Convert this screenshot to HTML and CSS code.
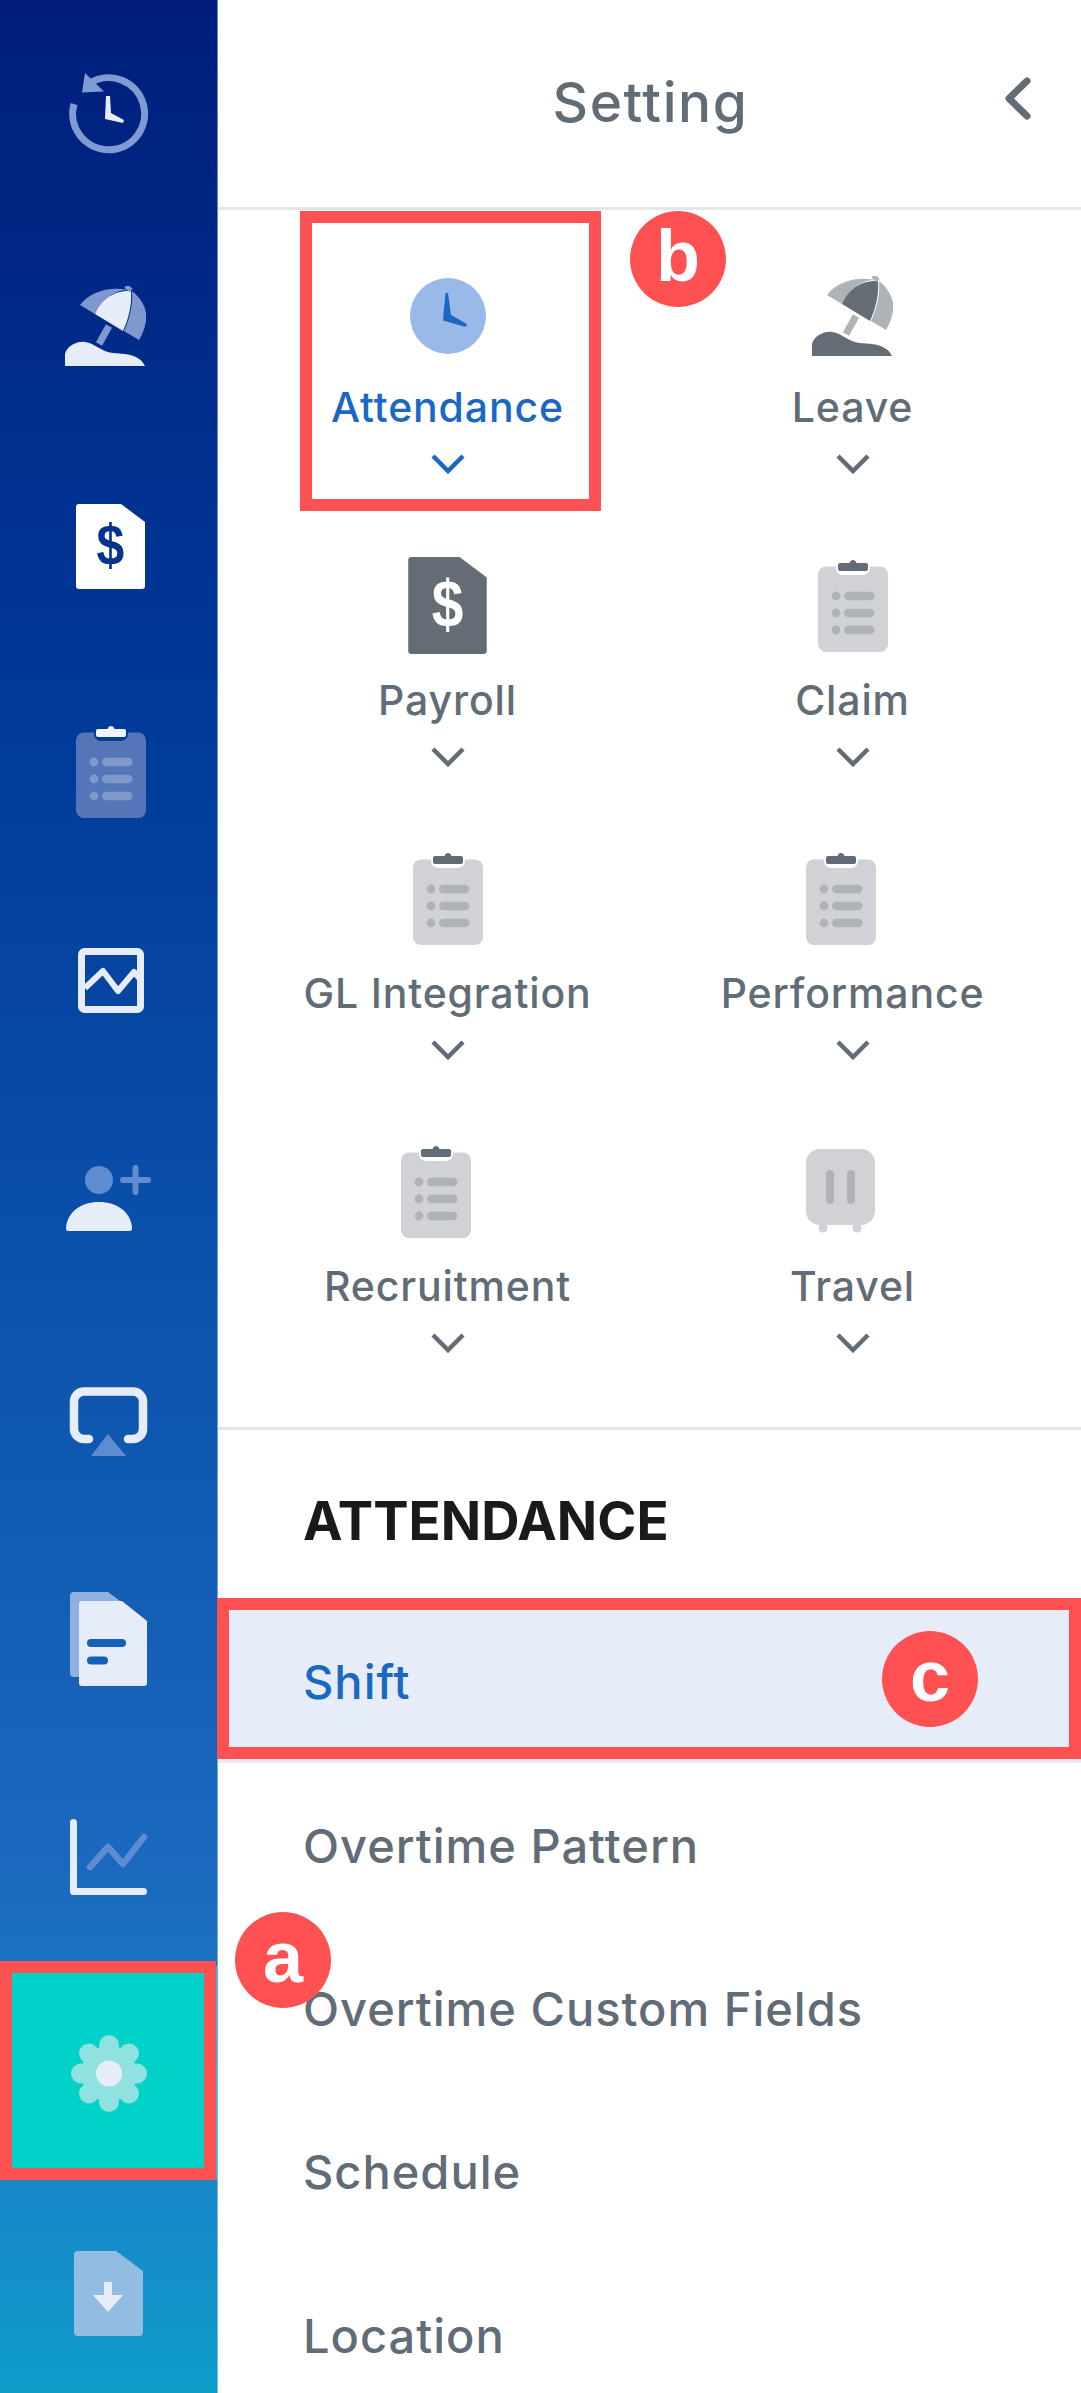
FILE: index.html
```html
<!DOCTYPE html>
<html lang="en">
<head>
<meta charset="utf-8">
<title>Setting</title>
<link rel="stylesheet" href="styles.css">
</head>
<body>
<svg class="defs" aria-hidden="true">
  <symbol id="i-clipboard" viewBox="0 0 70 94">
    <path class="a" d="M8 8.5H18V10a7 7 0 0 0 7 7H45a7 7 0 0 0 7-7V8.5H62a8 8 0 0 1 8 8V86a8 8 0 0 1-8 8H8a8 8 0 0 1-8-8V16.5a8 8 0 0 1 8-8Z"/>
    <circle class="b" cx="18" cy="38" r="4.4"/><circle class="b" cx="18" cy="55" r="4.4"/><circle class="b" cx="18" cy="72" r="4.4"/>
    <rect class="b" x="26" y="33.8" width="30.5" height="8.4" rx="4.2"/><rect class="b" x="26" y="50.8" width="30.5" height="8.4" rx="4.2"/><rect class="b" x="26" y="67.8" width="30.5" height="8.4" rx="4.2"/>
    <path class="c" d="M22 5H31.5C32.5 1 37.500 1 38.500 5H48a2 2 0 0 1 2 2V11a2 2 0 0 1-2 2H22a2 2 0 0 1-2-2V7a2 2 0 0 1 2-2Z"/>
  </symbol>
  <symbol id="i-beach" viewBox="0 0 81 80">
    <path class="b" d="M15 19C25 6 44 0 63 4C48 4 36 15 30 28Z"/>
    <path class="b" d="M67 5C77 13 83 24 81 35C80 42 77 49 74 54L59 45C65 32 68 18 67 5Z"/>
    <path class="c" d="M30 28C35 15 48 4 66 5C67 18 64 32 58 45Z"/>
    <path class="bs" d="M62 4L65 0.500M44 40L34 58"/>
    <path class="c" d="M0 80V68C2 60 12 55 20 56C30 57 36 66 48 67C58 68 74 67 80 80Z"/>
  </symbol>
  <symbol id="i-dollar" viewBox="0 0 69 85">
    <path class="a" d="M3 0H45L69 18V82a3 3 0 0 1-3 3H3a3 3 0 0 1-3-3V3a3 3 0 0 1 3-3Z"/>
  </symbol>
</svg>

<div class="app">
  <nav class="rail">
    <div class="rail-item">
      <svg class="ic" width="78" height="80" viewBox="0 0 78 80"><path class="rail-s-stroke" d="M4 31A36 36 0 1 0 20 10" stroke-width="7"/><path class="rail-s" d="M15 0L12 19.500L34 18.500Z"/><path class="rail-p" d="M36 23H40L41 40L54 47L53 50L35 46Z"/></svg>
    </div>
    <div class="rail-item">
      <svg class="ic set-rail lift shift-l" width="81" height="80"><use href="#i-beach"/></svg>
    </div>
    <div class="rail-item">
      <svg class="ic set-solid lift-s shift-r" width="69" height="85" viewBox="0 0 69 85"><use href="#i-dollar" width="69" height="85"/><text class="dollar" x="34.500" y="61">$</text></svg>
    </div>
    <div class="rail-item">
      <svg class="ic set-railclip drop shift-r" width="70" height="94"><use href="#i-clipboard"/></svg>
    </div>
    <div class="rail-item">
      <svg class="ic lift shift-r" width="66" height="65" viewBox="0 0 66 65"><rect class="rail-p-stroke" x="3.500" y="3.500" width="59" height="58" rx="3" stroke-width="7"/><path class="rail-p-stroke" d="M7 40L25 23L40 43L56 24L63 32" stroke-width="6"/></svg>
    </div>
    <div class="rail-item">
      <svg class="ic lift" width="85" height="65" viewBox="0 0 85 65"><circle class="rail-s" cx="33" cy="14" r="14"/><path class="rail-s-stroke round" d="M57 14H82M69.500 2V26" stroke-width="6"/><path class="rail-p" d="M2 65C0.500 65 0 64 0 62C1 46 15 36 33 36C51 36 65 46 66 62C66 64 65.500 65 64 65Z"/></svg>
    </div>
    <div class="rail-item">
      <svg class="ic" width="77" height="69" viewBox="0 0 77 69"><path class="rail-p-stroke round" d="M19 52H14a10 10 0 0 1-10-10V14.500a10 10 0 0 1 10-10H63a10 10 0 0 1 10 10V42a10 10 0 0 1-10 10H58" stroke-width="8.500"/><path class="rail-s" d="M38 47L56 69H21Z"/></svg>
    </div>
    <div class="rail-item">
      <svg class="ic" width="77" height="94" viewBox="0 0 77 94"><path class="rail-s2" d="M0 4a4 4 0 0 1 4-4H38L50 9V85H4a4 4 0 0 1-4-4Z"/><path class="rail-p" d="M9 12a3 3 0 0 1 3-3H52L77 29V91a3 3 0 0 1-3 3H12a3 3 0 0 1-3-3Z"/><rect class="rail-cut" x="17" y="47" width="39" height="8" rx="4"/><rect class="rail-cut" x="17" y="64.500" width="21" height="8" rx="4"/></svg>
    </div>
    <div class="rail-item">
      <svg class="ic" width="77" height="77" viewBox="0 0 77 77"><path class="rail-p-stroke round" d="M3.500 3.500V72.500H73.500" stroke-width="7"/><path class="rail-s-stroke round" d="M20 48L38 28L53 45L74 18" stroke-width="6.500"/></svg>
    </div>
    <div class="rail-item is-active">
      <svg class="ic" width="76" height="77" viewBox="0 0 76 77"><g class="gear"><circle cx="38" cy="38.500" r="28"/><circle cx="38" cy="10" r="10"/><circle cx="38" cy="67" r="10"/><circle cx="10" cy="38.500" r="10"/><circle cx="66" cy="38.500" r="10"/><circle cx="18" cy="18.500" r="10"/><circle cx="58" cy="18.500" r="10"/><circle cx="18" cy="58.500" r="10"/><circle cx="58" cy="58.500" r="10"/></g><circle class="rail-p" cx="38" cy="38.500" r="13"/></svg>
    </div>
    <div class="rail-item">
      <svg class="ic" width="69" height="85" viewBox="0 0 69 85"><path class="rail-s3" d="M4 0H42L69 20V81a4 4 0 0 1-4 4H4a4 4 0 0 1-4-4V4a4 4 0 0 1 4-4Z"/><path class="rail-p" d="M30 31H38V44H49L34 61L19 44H30Z"/></svg>
    </div>
  </nav>

  <main class="panel">
    <header class="panel-head">
      <h1 class="panel-title">Setting</h1>
      <svg class="back" width="27" height="43" viewBox="0 0 27 43"><path d="M23 4L5 21.500L23 39"/></svg>
    </header>

    <section class="modules">
      <div class="module is-current">
        <div class="module-icon"><svg class="low" width="76" height="76" viewBox="0 0 76 76"><circle class="clock-face" cx="38" cy="38" r="38"/><path class="clock-hand" d="M35.500 15H38L41 37L57 46L56 49L33 42.500L33.500 36Z"/></svg></div>
        <div class="module-name">Attendance</div>
        <svg class="chev" width="34" height="20" viewBox="0 0 34 20"><path d="M2 2L17 17L32 2"/></svg>
      </div>
      <div class="module">
        <div class="module-icon"><svg class="low set-gray-beach" width="81" height="80"><use href="#i-beach"/></svg></div>
        <div class="module-name">Leave</div>
        <svg class="chev" width="34" height="20" viewBox="0 0 34 20"><path d="M2 2L17 17L32 2"/></svg>
      </div>
      <div class="module">
        <div class="module-icon"><svg class="set-dark" width="79" height="97" viewBox="0 0 69 85"><use href="#i-dollar" width="69" height="85"/><text class="dollar" x="34.500" y="61">$</text></svg></div>
        <div class="module-name">Payroll</div>
        <svg class="chev" width="34" height="20" viewBox="0 0 34 20"><path d="M2 2L17 17L32 2"/></svg>
      </div>
      <div class="module">
        <div class="module-icon"><svg class="set-gray" width="70" height="94"><use href="#i-clipboard"/></svg></div>
        <div class="module-name">Claim</div>
        <svg class="chev" width="34" height="20" viewBox="0 0 34 20"><path d="M2 2L17 17L32 2"/></svg>
      </div>
      <div class="module">
        <div class="module-icon"><svg class="set-gray" width="70" height="94"><use href="#i-clipboard"/></svg></div>
        <div class="module-name">GL Integration</div>
        <svg class="chev" width="34" height="20" viewBox="0 0 34 20"><path d="M2 2L17 17L32 2"/></svg>
      </div>
      <div class="module">
        <div class="module-icon"><svg class="set-gray nudge" width="70" height="94"><use href="#i-clipboard"/></svg></div>
        <div class="module-name">Performance</div>
        <svg class="chev" width="34" height="20" viewBox="0 0 34 20"><path d="M2 2L17 17L32 2"/></svg>
      </div>
      <div class="module">
        <div class="module-icon"><svg class="set-gray nudge" width="70" height="94"><use href="#i-clipboard"/></svg></div>
        <div class="module-name">Recruitment</div>
        <svg class="chev" width="34" height="20" viewBox="0 0 34 20"><path d="M2 2L17 17L32 2"/></svg>
      </div>
      <div class="module">
        <div class="module-icon"><svg class="nudge" width="69" height="84" viewBox="0 0 69 84"><rect class="g-a" width="69" height="76" rx="14"/><circle class="g-a" cx="17" cy="79" r="4.500"/><circle class="g-a" cx="51" cy="79" r="4.500"/><rect class="g-b" x="20" y="21" width="8" height="34" rx="4"/><rect class="g-b" x="41" y="21" width="8" height="34" rx="4"/></svg></div>
        <div class="module-name">Travel</div>
        <svg class="chev" width="34" height="20" viewBox="0 0 34 20"><path d="M2 2L17 17L32 2"/></svg>
      </div>
    </section>

    <section class="submenu">
      <h2 class="submenu-title">ATTENDANCE</h2>
      <div class="submenu-row is-selected">Shift</div>
      <div class="submenu-row">Overtime Pattern</div>
      <div class="submenu-row">Overtime Custom Fields</div>
      <div class="submenu-row">Schedule</div>
      <div class="submenu-row">Location</div>
    </section>
  </main>

  <div class="mark mark-a"></div>
  <div class="mark mark-b"></div>
  <div class="mark mark-c"></div>
  <div class="bubble bubble-a">a</div>
  <div class="bubble bubble-b">b</div>
  <div class="bubble bubble-c">c</div>
</div>
</body>
</html>
```

FILE: styles.css
```css
* { box-sizing: border-box; }
html, body { margin: 0; padding: 0; }
body { width: 1081px; height: 2393px; overflow: hidden; background: #fff; font-family: Inter, "Liberation Sans", sans-serif; }
.defs { position: absolute; width: 0; height: 0; }
.app { position: relative; display: flex; width: 1081px; height: 2393px; overflow: hidden; }

/* rail */
.rail { flex: 0 0 218px; height: 2393px; padding-top: 4px; display: flex; flex-direction: column; overflow: hidden; border-right: 1px solid rgba(190, 220, 255, .55); background: linear-gradient(180deg, #001d7b 0%, #013a99 30%, #0a50aa 52%, #1a69be 78%, #1c7fc8 88%, #0e9cc9 100%); }
.rail-item { flex: 0 0 218px; display: flex; align-items: center; justify-content: center; }
.rail-item.is-active { flex-basis: 214px; margin-bottom: 4px; background: #00d1c9; }
.ic { display: block; overflow: visible; }
.lift { margin-bottom: 10px; }
.lift-s { margin-bottom: 5px; }
.drop { margin-top: 8px; }
.shift-l { margin-right: 7px; }
.shift-r { margin-left: 4px; }
.rail-p { fill: #e6edf9; }
.rail-s { fill: #7f9bd4; }
.rail-item:nth-child(n+6) .rail-s { fill: #5f8bd0; }
.rail-s2 { fill: #8fb0e0; }
.rail-s3 { fill: #92bce2; }
.rail-cut { fill: #1560b8; }
.rail-p-stroke, .rail-s-stroke { fill: none; stroke-linejoin: round; }
.rail-p-stroke { stroke: #e6edf9; }
.rail-s-stroke { stroke: #7f9bd4; }
.rail-item:nth-child(n+6) .rail-s-stroke { stroke: #5f8bd0; }
.round { stroke-linecap: round; }
.gear { fill: #8fe2df; }

.a, .b, .c { stroke: none; }
.a { fill: var(--a); }
.b { fill: var(--b); }
.c { fill: var(--c); }
.bs { fill: none; stroke: var(--b); stroke-width: 7; }
.dollar { font-family: "Liberation Sans", sans-serif; font-weight: 700; font-size: 58px; text-anchor: middle; fill: var(--d); transform-box: fill-box; transform-origin: center; transform: scaleX(.86); }
.set-rail { --b: #7f98cf; --c: #e6edf9; }
.set-solid { --a: #fff; --d: #05348f; }
.set-railclip { --a: #5476b9; --b: #8099cb; --c: #f0f4fb; }
.set-gray { --a: #d0d2d5; --b: #b0b3b6; --c: #616c76; }
.set-gray-beach { --b: #aeb3b6; --c: #646c75; }
.set-dark { --a: #646c75; --d: #fff; }
.g-a { fill: #d0d2d5; }
.g-b { fill: #b0b3b6; }

/* panel */
.panel { flex: 1 1 auto; min-width: 0; display: flex; flex-direction: column; }
.panel-head { position: relative; flex: 0 0 210px; display: flex; align-items: center; justify-content: center; padding: 0 0 3px 2px; border-bottom: 3px solid #e3e5e7; }
.panel-title { margin: 0; font-size: 55px; font-weight: 500; line-height: 1; color: #616c76; letter-spacing: 1.6px; }
.back { position: absolute; left: 786px; top: 77px; fill: none; stroke: #616c76; stroke-width: 7; stroke-linecap: round; stroke-linejoin: round; }

.modules { display: grid; grid-template-columns: 405px 405px; grid-auto-rows: 293px; padding: 2px 0 0 27px; }
.module { display: flex; flex-direction: column; align-items: center; padding-top: 50px; color: #616c76; }
.module.is-current { color: #1a68c4; }
.module-icon { height: 100px; display: flex; align-items: center; justify-content: center; }
.module-icon svg { display: block; }
.low { margin-top: 7px; }
.nudge { margin-right: 24px; }
.clock-face { fill: #99b9e8; }
.clock-hand { fill: #1a68c4; }
.module-name { margin-top: 17px; font-size: 41px; font-weight: 500; line-height: 56px; white-space: nowrap; letter-spacing: .85px; }
.chev { margin-top: 19px; fill: none; stroke: currentColor; stroke-width: 4.500; stroke-linejoin: miter; }

.submenu { margin-top: 43px; border-top: 3px solid #e3e5e7; }
.submenu-title { height: 170px; margin: 0; padding: 12px 0 0 85px; display: flex; align-items: center; font-size: 53px; font-weight: 700; color: #1a1a1a; }
.submenu-row { height: 163.4px; padding-left: 85px; display: flex; align-items: center; font-size: 47px; font-weight: 500; color: #616c76; white-space: nowrap; letter-spacing: 1px; }
.submenu-row.is-selected { background: #e6edf9; color: #1a68c4; }

/* annotations */
.mark { position: absolute; border: 12px solid #ff5052; }
.mark-a { left: 0; top: 1961px; width: 216px; height: 219px; }
.mark-b { left: 300px; top: 211px; width: 301px; height: 300px; }
.mark-c { left: 217px; top: 1598px; width: 864px; height: 161px; }
.bubble { position: absolute; width: 96px; height: 96px; border-radius: 50%; background: #ff5052; color: #fff; font-family: "Liberation Sans", sans-serif; font-weight: 700; font-size: 72px; line-height: 90px; text-align: center; }
.bubble-a { left: 235px; top: 1912px; }
.bubble-b { left: 630px; top: 211px; }
.bubble-c { left: 882px; top: 1631px; }
```
